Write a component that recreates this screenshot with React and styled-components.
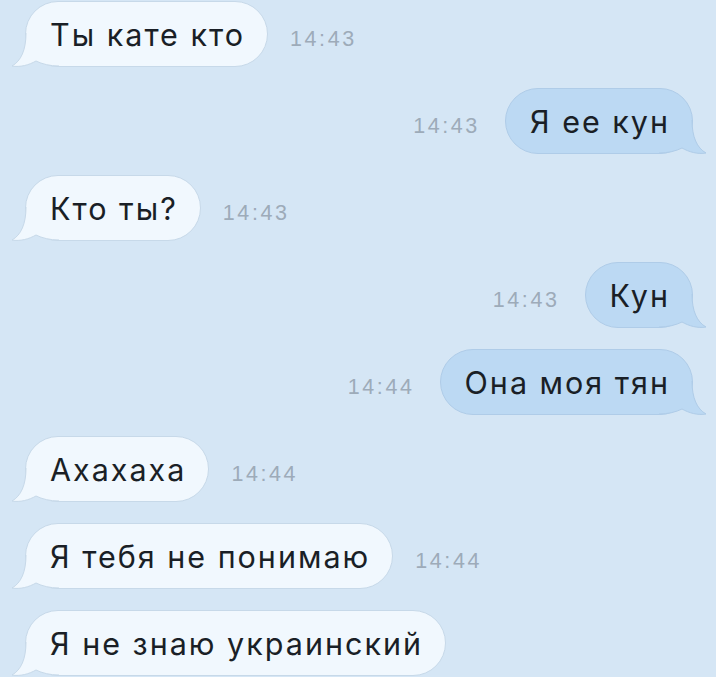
import React from "react";
import styled, { createGlobalStyle } from "styled-components";

const Global = createGlobalStyle`
  html, body { margin: 0; padding: 0; background: #d5e6f5; }
`;

const Chat = styled.div`
  width: 716px;
  height: 677px;
  overflow: hidden;
  box-sizing: border-box;
  background: #d5e6f5;
  display: flex;
  flex-direction: column;
  gap: 21px;
  padding: 1px 23px 0 25px;
  font-family: Inter, "Liberation Sans", Arial, sans-serif;
`;

const Row = styled.div`
  display: flex;
  flex-direction: ${(p) => (p.$out ? "row-reverse" : "row")};
  align-items: baseline;
  gap: ${(p) => (p.$out ? "25px" : "22px")};
`;

const Bubble = styled.div`
  position: relative;
  height: 66px;
  box-sizing: border-box;
  display: inline-flex;
  align-items: center;
  padding: 0 22px 0 24px;
  border-radius: 33px;
  background: ${(p) => (p.$out ? "#bcd9f3" : "#f1f8fe")};
  border: 1px solid ${(p) => (p.$out ? "#afcce8" : "#c7d9e9")};
  color: #1a1f26;
  font-size: 30.5px;
  letter-spacing: 2px;
  white-space: nowrap;
`;

const Text = styled.span`
  position: relative;
  z-index: 1;
`;

const Time = styled.span`
  font-family: "Liberation Sans", Arial, sans-serif;
  font-size: 21.5px;
  letter-spacing: 2.6px;
  color: #9dabb9;
`;

const TailSvg = styled.svg`
  position: absolute;
  bottom: -2px;
  ${(p) => (p.$out ? "right: -15px; transform: scaleX(-1);" : "left: -15px;")}
  width: 50px;
  height: 40px;
  overflow: visible;
`;

function Tail({ out }) {
  const fill = out ? "#bcd9f3" : "#f1f8fe";
  const stroke = out ? "#afcce8" : "#c7d9e9";
  const d = "M15,5 C15,22 10,33 1,38 C9,39.5 18,37 25,33 C31,36 39,38 48,38";
  return (
    <TailSvg $out={out} viewBox="0 0 50 40">
      <path d={`${d} L48,5 Z`} fill={fill} />
      <path d={d} fill="none" stroke={stroke} strokeWidth="1" />
    </TailSvg>
  );
}

const messages = [
  { text: "Ты кате кто", time: "14:43" },
  { text: "Я ее кун", time: "14:43", out: true },
  { text: "Кто ты?", time: "14:43" },
  { text: "Кун", time: "14:43", out: true },
  { text: "Она моя тян", time: "14:44", out: true },
  { text: "Ахахаха", time: "14:44" },
  { text: "Я тебя не понимаю", time: "14:44" },
  { text: "Я не знаю украинский" },
];

export default function App() {
  return (
    <>
      <Global />
      <Chat>
        {messages.map((m, i) => (
          <Row key={i} $out={m.out}>
            <Bubble $out={m.out}>
              <Tail out={m.out} />
              <Text>{m.text}</Text>
            </Bubble>
            {m.time && <Time>{m.time}</Time>}
          </Row>
        ))}
      </Chat>
    </>
  );
}
